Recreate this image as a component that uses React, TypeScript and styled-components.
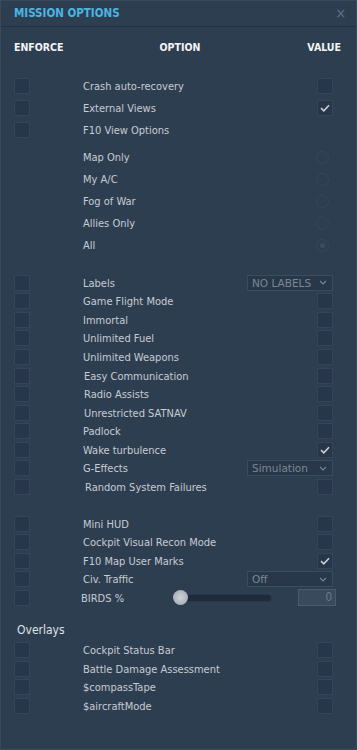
import React from "react";
import styled, { createGlobalStyle } from "styled-components";

const GlobalStyle = createGlobalStyle`
  html, body {
    margin: 0;
    padding: 0;
    background: #2e3e51;
  }
  * {
    box-sizing: border-box;
  }
`;

const Window = styled.div`
  width: 357px;
  height: 750px;
  background: #2e3e51;
  border: 1px solid #3a4a5d;
  font-family: "DejaVu Sans Condensed", "DejaVu Sans", sans-serif;
  font-stretch: condensed;
  overflow: hidden;
`;

const TitleBar = styled.div`
  height: 26px;
  display: flex;
  align-items: center;
  justify-content: space-between;
  padding: 0 10px 1px 13px;
  border-bottom: 1px solid #223040;
`;

const Title = styled.span`
  color: #4cb5e2;
  font-weight: bold;
  font-size: 11.5px;
`;

const Close = styled.span`
  color: #62748a;
  font-size: 14px;
  line-height: 1;
`;

const HeaderRow = styled.div`
  height: 40px;
  display: flex;
  align-items: center;
  padding: 0 15px 0 13px;
  color: #f2f4f6;
  font-weight: bold;
  font-size: 10.5px;
`;

const HeadOption = styled.span`
  margin-left: 96px;
  flex: 1;
`;

const Section = styled.div<{ $gap: number }>`
  margin-top: ${(p) => p.$gap}px;
`;

const Row = styled.div<{ $h: number }>`
  height: ${(p) => p.$h}px;
  display: flex;
  align-items: center;
  padding: 0 23px 0 13px;
`;

const Slot = styled.div`
  width: 16px;
  flex: none;
`;

const Label = styled.span<{ $shift?: number }>`
  flex: 1;
  margin-left: ${(p) => 53 + (p.$shift || 0)}px;
  padding-top: 1px;
  color: #c7ccd2;
  font-size: 11px;
  white-space: nowrap;
`;

const Box = styled.div`
  width: 16px;
  height: 16px;
  flex: none;
  background: #27364a;
  border: 1px solid #34455a;
  display: flex;
  align-items: center;
  justify-content: center;
`;

const Radio = styled.div<{ $on?: boolean }>`
  width: 13px;
  height: 13px;
  margin-right: 4px;
  border-radius: 50%;
  border: 1px solid #36475b;
  display: flex;
  align-items: center;
  justify-content: center;
  &::after {
    content: "";
    width: 5px;
    height: 5px;
    border-radius: 50%;
    background: ${(p) => (p.$on ? "#3b4c60" : "transparent")};
  }
`;

const Select = styled.div`
  width: 86px;
  height: 16px;
  flex: none;
  display: flex;
  align-items: center;
  justify-content: space-between;
  padding: 0 5px 0 4px;
  background: #28374a;
  border: 1px solid #3b4c60;
  color: #7a8795;
  font-size: 10.5px;
  font-stretch: normal;
  font-family: "DejaVu Sans", sans-serif;
`;

const SliderWrap = styled.div`
  position: relative;
  width: 99px;
  height: 15px;
  margin-right: 26px;
  flex: none;
  display: flex;
  align-items: center;
`;

const Track = styled.div`
  margin-left: 7px;
  flex: 1;
  height: 8px;
  border-radius: 4px;
  background: #1f2b39;
  border: 1px solid #2a3849;
`;

const Thumb = styled.div`
  position: absolute;
  left: 0;
  top: 0;
  width: 15px;
  height: 15px;
  border-radius: 50%;
  background: radial-gradient(circle at 50% 50%, #d0d4d9 0%, #aab1b9 70%, #9aa2ab 100%);
`;

const NumberBox = styled.div`
  width: 38px;
  height: 17px;
  margin-right: -3px;
  flex: none;
  background: #3a4a5d;
  border: 1px solid #4a5b6e;
  color: #6c7a89;
  font-size: 11.5px;
  text-align: right;
  padding-right: 3px;
  line-height: 15px;
`;

const Heading = styled.div`
  height: 22px;
  margin-top: 12px;
  padding-left: 16px;
  display: flex;
  align-items: center;
  color: #dfe3e7;
  font-size: 12px;
`;

const Check = () => (
  <svg width="10" height="8" viewBox="0 0 10 8">
    <polyline points="1,4.2 3.8,6.8 9,1.2" fill="none" stroke="#c9ced4" strokeWidth="1.6" />
  </svg>
);

const Chevron = () => (
  <svg width="8" height="5" viewBox="0 0 8 5">
    <polyline points="1,1 4,4 7,1" fill="none" stroke="#7a8795" strokeWidth="1.1" />
  </svg>
);

type Value = { kind: "box"; on?: boolean } | { kind: "none" } | { kind: "select"; text: string };

interface Opt {
  label: string;
  value: Value;
  shift?: number;
}

function ValueCell({ value }: { value: Value }) {
  if (value.kind === "box") return <Box>{value.on && <Check />}</Box>;
  if (value.kind === "select")
    return (
      <Select>
        <span>{value.text}</span>
        <Chevron />
      </Select>
    );
  return null;
}

function OptionRow({ opt, h }: { opt: Opt; h: number }) {
  return (
    <Row $h={h}>
      <Box />
      <Label $shift={opt.shift}>{opt.label}</Label>
      <ValueCell value={opt.value} />
    </Row>
  );
}

const box = (on?: boolean): Value => ({ kind: "box", on });

const top: Opt[] = [
  { label: "Crash auto-recovery", value: box() },
  { label: "External Views", value: box(true) },
  { label: "F10 View Options", value: { kind: "none" } },
];

const views = ["Map Only", "My A/C", "Fog of War", "Allies Only", "All"];

const gameplay: Opt[] = [
  { label: "Labels", value: { kind: "select", text: "NO LABELS" } },
  { label: "Game Flight Mode", value: box() },
  { label: "Immortal", value: box() },
  { label: "Unlimited Fuel", value: box() },
  { label: "Unlimited Weapons", value: box() },
  { label: "Easy Communication", value: box(), shift: 1 },
  { label: "Radio Assists", value: box(), shift: 1 },
  { label: "Unrestricted SATNAV", value: box(), shift: 1 },
  { label: "Padlock", value: box() },
  { label: "Wake turbulence", value: box(true) },
  { label: "G-Effects", value: { kind: "select", text: "Simulation" } },
  { label: "Random System Failures", value: box(), shift: 2 },
];

const misc: Opt[] = [
  { label: "Mini HUD", value: box() },
  { label: "Cockpit Visual Recon Mode", value: box() },
  { label: "F10 Map User Marks", value: box(true) },
  { label: "Civ. Traffic", value: { kind: "select", text: "Off" } },
];

const overlays: Opt[] = [
  { label: "Cockpit Status Bar", value: box() },
  { label: "Battle Damage Assessment", value: box() },
  { label: "$compassTape", value: box() },
  { label: "$aircraftMode", value: box() },
];

export default function App() {
  return (
    <>
      <GlobalStyle />
      <Window>
        <TitleBar>
          <Title>MISSION OPTIONS</Title>
          <Close>×</Close>
        </TitleBar>
        <HeaderRow>
          <span>ENFORCE</span>
          <HeadOption>OPTION</HeadOption>
          <span>VALUE</span>
        </HeaderRow>

        <Section $gap={8}>
          {top.map((o) => (
            <OptionRow key={o.label} opt={o} h={22} />
          ))}
        </Section>

        <Section $gap={5}>
          {views.map((v) => (
            <Row key={v} $h={22}>
              <Slot />
              <Label>{v}</Label>
              <Radio $on={v === "All"} />
            </Row>
          ))}
        </Section>

        <Section $gap={17.5}>
          {gameplay.map((o) => (
            <OptionRow key={o.label} opt={o} h={18.55} />
          ))}
        </Section>

        <Section $gap={18.5}>
          {misc.map((o) => (
            <OptionRow key={o.label} opt={o} h={18.5} />
          ))}
          <Row $h={18.5}>
            <Box />
            <Label $shift={-2}>BIRDS %</Label>
            <SliderWrap>
              <Track />
              <Thumb />
            </SliderWrap>
            <NumberBox>0</NumberBox>
          </Row>
        </Section>

        <Heading>Overlays</Heading>
        <Section $gap={0}>
          {overlays.map((o) => (
            <OptionRow key={o.label} opt={o} h={18.5} />
          ))}
        </Section>
      </Window>
    </>
  );
}
